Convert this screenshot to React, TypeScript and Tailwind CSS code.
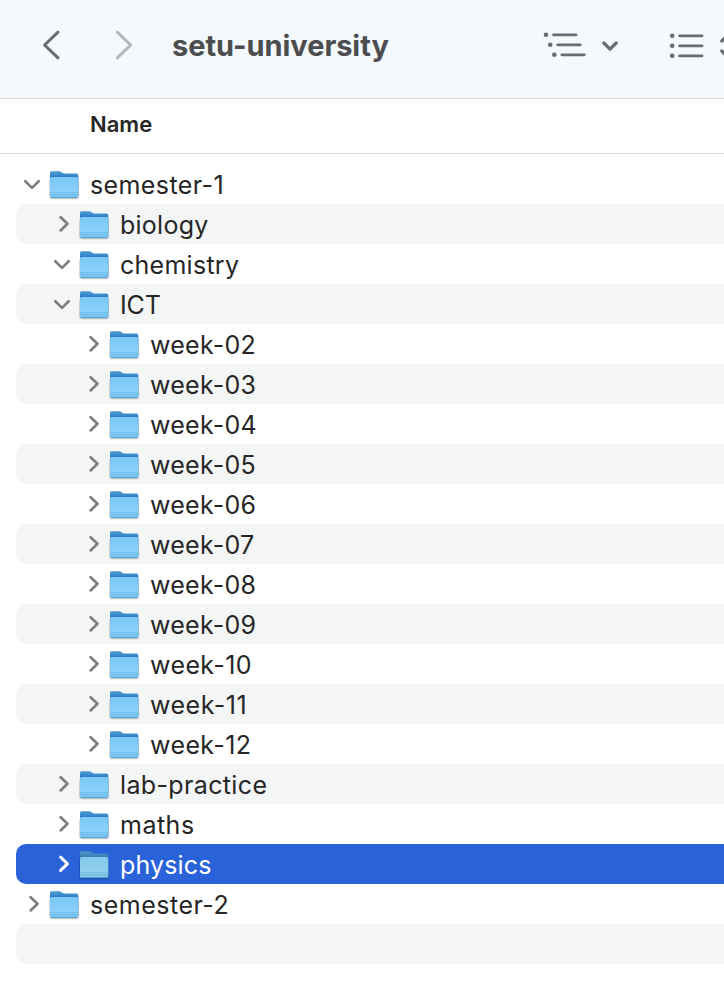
type Item = { name: string; depth: number; open?: boolean; selected?: boolean; tracking: string };

const items: Item[] = [
  { name: 'semester-1', depth: 0, open: true, tracking: 'tracking-[0.4px]' },
  { name: 'biology', depth: 1, tracking: 'tracking-[0.25px]' },
  { name: 'chemistry', depth: 1, open: true, tracking: 'tracking-[0.27px]' },
  { name: 'ICT', depth: 1, open: true, tracking: 'tracking-[-0.1px]' },
  { name: 'week-02', depth: 2, tracking: 'tracking-[0.25px]' },
  { name: 'week-03', depth: 2, tracking: 'tracking-[0.25px]' },
  { name: 'week-04', depth: 2, tracking: 'tracking-[0.25px]' },
  { name: 'week-05', depth: 2, tracking: 'tracking-[0.25px]' },
  { name: 'week-06', depth: 2, tracking: 'tracking-[0.25px]' },
  { name: 'week-07', depth: 2, tracking: 'tracking-[0.25px]' },
  { name: 'week-08', depth: 2, tracking: 'tracking-[0.25px]' },
  { name: 'week-09', depth: 2, tracking: 'tracking-[0.25px]' },
  { name: 'week-10', depth: 2, tracking: 'tracking-[0.4px]' },
  { name: 'week-11', depth: 2, tracking: 'tracking-[0.5px]' },
  { name: 'week-12', depth: 2, tracking: 'tracking-[0.4px]' },
  { name: 'lab-practice', depth: 1, tracking: 'tracking-[0.36px]' },
  { name: 'maths', depth: 1, tracking: 'tracking-[0.5px]' },
  { name: 'physics', depth: 1, selected: true, tracking: 'tracking-[0.15px]' },
  { name: 'semester-2', depth: 0, tracking: 'tracking-[0.5px]' },
];

const indents = ['pl-[4px]', 'pl-[34px]', 'pl-[64px]'];

function Folder({ selected }: { selected?: boolean }) {
  return (
    <svg className="h-10 w-8 shrink-0" viewBox="0 0 32 40" fill="none">
      <defs>
        <linearGradient id="folderBack" gradientUnits="userSpaceOnUse" x1="0" y1="7" x2="0" y2="14">
          <stop offset="0" stopColor="#4a98cd" />
          <stop offset="0.5" stopColor="#3f8fce" />
          <stop offset="1" stopColor="#2872c4" />
        </linearGradient>
        <linearGradient id="folderBackSelected" gradientUnits="userSpaceOnUse" x1="0" y1="7" x2="0" y2="14">
          <stop offset="0" stopColor="#4f9bc8" />
          <stop offset="1" stopColor="#357bb5" />
        </linearGradient>
        <linearGradient id="folderFront" x1="0" y1="0" x2="0" y2="1">
          <stop offset="0" stopColor="#7dc7f6" />
          <stop offset="0.7" stopColor="#89d1fb" />
          <stop offset="1" stopColor="#78c2ef" />
        </linearGradient>
        <linearGradient id="folderSelected" x1="0" y1="0" x2="0" y2="1">
          <stop offset="0" stopColor="#86c8ec" />
          <stop offset="0.75" stopColor="#90d1f0" />
          <stop offset="1" stopColor="#7dc0e2" />
        </linearGradient>
      </defs>
      <rect x="1.4" y="14" width="29.4" height="20.9" rx="2.4" fill="#000" opacity="0.15" />
      <rect x="1" y="14" width="30.2" height="21.7" rx="2.4" fill="#000" opacity="0.07" />
      <path d="M2 32V8.8Q2 7.2 3.6 7.2H11.2Q12.3 7.2 13.2 7.9L14.3 8.8Q15.2 9.5 16.4 9.5H28.6Q30.3 9.5 30.3 11.4V32Z" fill={selected ? 'url(#folderBackSelected)' : 'url(#folderBack)'} />
      <rect x="2" y="13" width="28.3" height="20.9" rx="1.6" fill={selected ? 'url(#folderSelected)' : 'url(#folderFront)'} />
      <path d="M2 28.5H30.3M2 30.6H30.3" stroke="#4e9fcf" strokeWidth="0.6" opacity="0.6" />
      <path d="M3 33.6H29.3" stroke="#4593c5" strokeWidth="0.8" opacity="0.85" />
    </svg>
  );
}

function Disclosure({ open, selected }: { open?: boolean; selected?: boolean }) {
  return (
    <svg
      className={`h-10 w-7 shrink-0 ${selected ? 'text-white' : 'text-[#7d7e7e]'}`}
      viewBox="0 0 28 40"
      fill="none"
      stroke="currentColor"
      strokeWidth={selected ? 3 : 2.7}
      strokeLinecap="round"
      strokeLinejoin="round"
    >
      <path d={open ? 'M5.3 17.3L12 23.9L18.7 17.3' : 'M10.6 13.2L17.5 19.8L10.6 26.4'} />
    </svg>
  );
}

function Row({ item, index }: { item: Item; index: number }) {
  const bg = item.selected ? 'bg-[#2962d9] text-white' : index % 2 ? 'bg-[#f4f5f5] text-[#262626]' : 'text-[#262626]';
  return (
    <li className={`flex h-10 items-center rounded-l-[10px] ${indents[item.depth]} ${bg}`}>
      <Disclosure open={item.open} selected={item.selected} />
      <Folder selected={item.selected} />
      <span className={`ml-[10px] whitespace-nowrap pt-[2px] text-[25px] leading-[38px] ${item.tracking}`}>{item.name}</span>
    </li>
  );
}

export default function App() {
  return (
    <div className="h-[988px] w-[724px] overflow-hidden bg-white font-['Inter','Liberation_Sans',sans-serif]">
      <header className="flex h-[99px] border-b border-[#d5d8da] bg-[#f3f9fd] pb-[6px] text-[#696d70]">
        <svg className="h-[90px] w-[172px] shrink-0" viewBox="0 0 172 90" fill="none" strokeWidth="3" strokeLinecap="round" strokeLinejoin="round">
          <path d="M58 32.2L44.6 45L58 57.8" stroke="#696d70" />
          <path d="M117.3 32.2L130.7 45L117.3 57.8" stroke="#b2b7ba" />
        </svg>
        <h1 className="w-[368px] shrink-0 whitespace-nowrap text-[29px] font-bold leading-[92px] tracking-[-0.04px] text-[#4c4d4e]">setu-university</h1>
        <svg className="h-[90px] w-[184px] shrink-0" viewBox="540 0 184 90" fill="none" stroke="currentColor" strokeLinecap="round" strokeLinejoin="round">
          <g fill="currentColor" stroke="none">
            <circle cx="546" cy="34.8" r="2.3" />
            <circle cx="550.2" cy="44.8" r="2.3" />
            <circle cx="554.3" cy="54.8" r="2.3" />
            <circle cx="672.2" cy="35.8" r="2.3" />
            <circle cx="672.2" cy="45.8" r="2.3" />
            <circle cx="672.2" cy="55.8" r="2.3" />
          </g>
          <path d="M553.5 34.8H576.1M557.7 44.8H580.3M561.8 54.8H584.4M679.5 35.8H702.1M679.5 45.8H702.1M679.5 55.8H702.1" strokeWidth="2.7" />
          <path d="M603.8 43L610 49.2L616.2 43" strokeWidth="3.2" />
          <path d="M721.8 41L727.5 35.3M721.8 51L727.5 56.7" strokeWidth="3.2" />
        </svg>
      </header>
      <div className="flex h-[55px] items-center border-b border-[#dcdddd] pb-[3px] pl-[90px] text-[22px] font-semibold text-[#262626]">Name</div>
      <ul className="pl-4 pt-[10px]">
        {items.map((item, i) => <Row key={item.name} item={item} index={i} />)}
        <li className="h-10 rounded-l-[10px] bg-[#f4f5f5]" />
      </ul>
    </div>
  );
}
